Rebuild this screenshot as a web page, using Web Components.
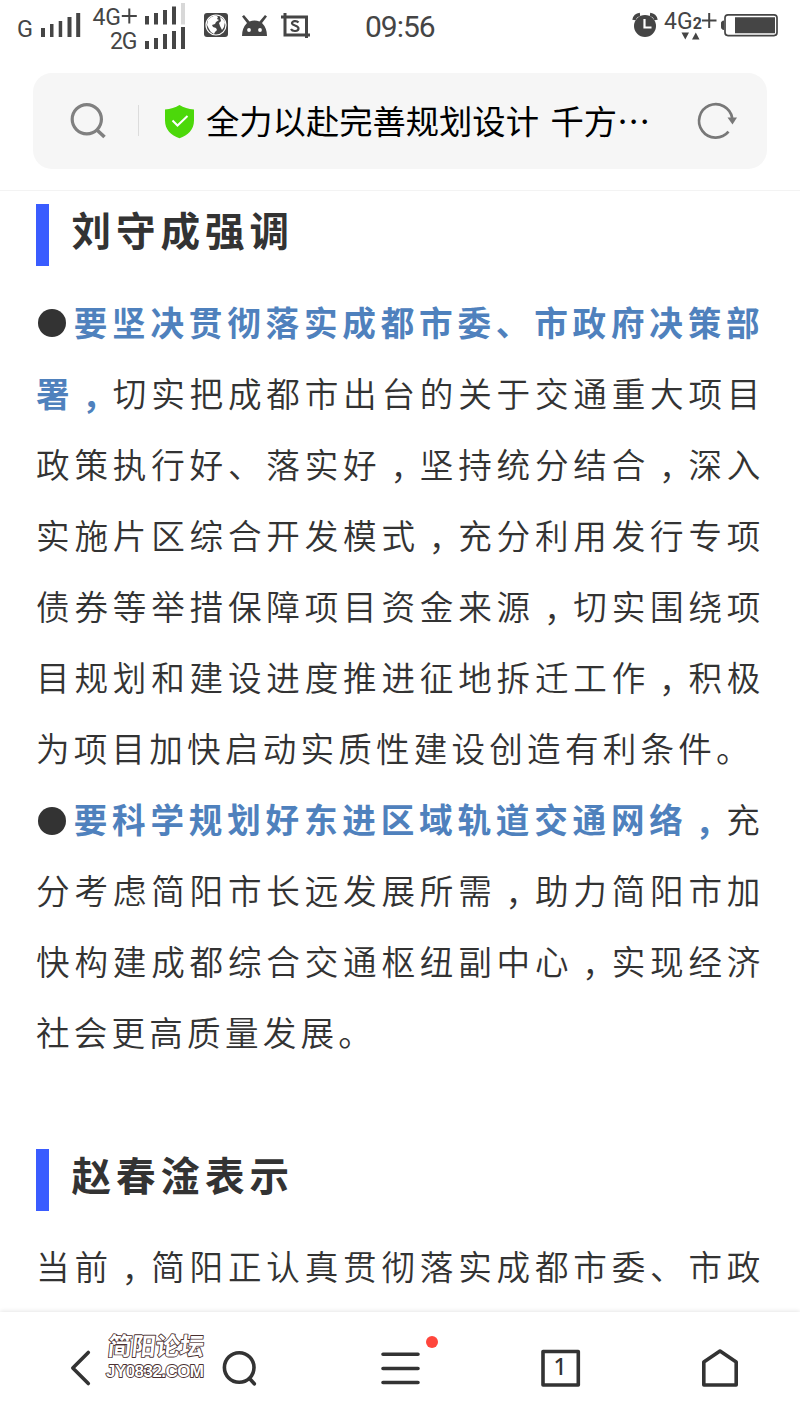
<!DOCTYPE html>
<html lang="zh-CN">
<head>
<meta charset="utf-8">
<title>刘守成强调</title>
<style>
    html, body {
        margin: 0;
        background: #fff;
    }
    body {
        width: 800px;
        height: 1423px;
        overflow: hidden;
        font-family: "Noto Sans CJK SC", sans-serif;
        color: #333;
    }
</style>
</head>
<body>
<phone-screen>
    <status-bar slot="top" time="09:56"></status-bar>
    <address-bar slot="top">全力以赴完善规划设计 千方…</address-bar>

    <section-title>刘守成强调</section-title>
    <article-text><bullet-dot></bullet-dot><b>要坚决贯彻落实成都市委、市政府决策部<br>署<i>，</i></b>切实把成都市出台的关于交通重大项目<br>政策执行好、落实好<i>，</i>坚持统分结合<i>，</i>深入<br>实施片区综合开发模式<i>，</i>充分利用发行专项<br>债券等举措保障项目资金来源<i>，</i>切实围绕项<br>目规划和建设进度推进征地拆迁工作<i>，</i>积极<br><span>为项目加快启动实质性建设创造有利条件。</span></article-text>
    <article-text><bullet-dot></bullet-dot><b>要科学规划好东进区域轨道交通网络<i>，</i></b>充<br>分考虑简阳市长远发展所需<i>，</i>助力简阳市加<br>快构建成都综合交通枢纽副中心<i>，</i>实现经济<br><span>社会更高质量发展。</span></article-text>
    <section-title class="next">赵春淦表示</section-title>
    <article-text>当前<i>，</i>简阳正认真贯彻落实成都市委、市政</article-text>

    <nav-bar slot="bottom" tabs="1">
        <water-mark></water-mark>
    </nav-bar>
</phone-screen>

<script>
class PhoneScreen extends HTMLElement {
    constructor() {
        super();
        this.attachShadow({ mode: 'open' });
        this.shadowRoot.innerHTML = `
            <style>
                :host {
                    display: flex;
                    flex-direction: column;
                    height: 1423px;
                }
                main {
                    flex: 1;
                    min-height: 0;
                    overflow: hidden;
                    padding: 13px 0 0 36px;
                    box-sizing: border-box;
                }
                ::slotted(section-title.next) {
                    margin-top: 81px;
                }
            </style>
            <slot name="top"></slot>
            <main><slot></slot></main>
            <slot name="bottom"></slot>
        `;
    }
}

class StatusBar extends HTMLElement {
    constructor() {
        super();
        this.attachShadow({ mode: 'open' });
        this.shadowRoot.innerHTML = `
            <style>
                :host {
                    display: flex;
                    height: 56px;
                    flex: none;
                    color: #454545;
                    font-family: Roboto, sans-serif;
                }
                svg {
                    display: block;
                    flex: none;
                    fill: currentColor;
                }
                .time {
                    width: 170px;
                    padding-left: 45px;
                    font-size: 30px;
                    line-height: 54px;
                    letter-spacing: -1px;
                    flex: 1;
                }
            </style>
            <svg width="190" height="56" viewBox="0 0 190 56" font-size="23">
                <text x="17" y="36.5" textLength="16" lengthAdjust="spacingAndGlyphs">G</text>
                <path d="M41 28h4v9h-4zM50 24h3.5v13H50zM58.700 21h3.500v16h-3.500zM67.500 17h4v20h-4zM76.200 13h4v24h-4z"/>
                <text x="92.500" y="24.500" textLength="28.500">4G</text>
                <path d="M121.800 15h6.500V8.500h2V15h6.500v2h-6.500v6.500h-2V17h-6.500z"/>
                <path d="M145 16h4v8.500h-4zM154 13h4v11.500h-4zM163 10h4v14.500h-4zM172 6.500h4v18h-4z"/>
                <path fill="#d8d8d8" d="M181 3h4v21.500h-4z"/>
                <text x="110" y="49" textLength="27.500">2G</text>
                <path d="M145 41h4v8h-4zM154 38h4v11h-4zM163 34h4v15h-4zM172 31h4v18h-4zM181 27h4v22h-4z"/>
            </svg>
            <svg width="130" height="56" viewBox="190 0 130 56">
                <rect x="204" y="13" width="24" height="24" rx="3"/>
                <circle cx="216" cy="25" r="10" fill="none" stroke="#fff" stroke-width="1.200"/>
                <path fill="#fff" d="M208 20q3-4 8-4.500l2 1.500-1 2 2 1-3 2-1 2-3 1 1 2 3 1 1 2-2 2-1 2q-4-2-5-5l-2-4zM220 17q3 1 5 5l-1 5-2 3-2-4-1-3 2-2z"/>
                <path d="M242 36q0-8 5-13l-5-6.500 2-1.500 5.500 6.500q5-2 10 0l5.500-6.500 2 1.500-5 6.500q5 5 5 13z"/>
                <circle cx="249" cy="30" r="1.900" fill="#fff"/><circle cx="260" cy="30" r="1.900" fill="#fff"/>
                <path fill="none" stroke="currentColor" stroke-width="3" d="M281 17h25.500v21M285 13v22h25"/>
                <path fill="none" stroke="currentColor" stroke-width="2.200" d="M298.500 22.500c-2-2.500-7-1.500-6.500 1 .5 2.500 6.500 1.500 6.500 5 0 3-6 3.500-7.500.5"/>
            </svg>
            <div class="time"></div>
            <svg width="180" height="56" viewBox="620 0 180 56">
                <circle cx="645" cy="26" r="11"/>
                <path fill="none" stroke="currentColor" stroke-width="3.500" d="M634 20q1-5 6-5.500M656 20q-1-5-6-5.500"/>
                <path fill="none" stroke="#fff" stroke-width="2.200" d="M644.500 19v8.500h7"/>
                <text x="664" y="29" font-size="24" textLength="28.500" lengthAdjust="spacingAndGlyphs">4G</text>
                <text x="692.800" y="29" font-size="16" font-weight="700">2</text>
                <path d="M702 19.500h6.200V13h2v6.500h6.300v2h-6.300V28h-2v-6.500H702zM681.500 32.500h7.500l-3.700 7zM692 39.500h7.500l-3.700-7z"/>
                <rect x="725" y="14.800" width="52" height="20.800" rx="3" fill="none" stroke="currentColor" stroke-width="1.700"/>
                <path d="M735 17.300h40v16h-40zM724 20.500q-3 .5-3 2.500v4q0 2.500 3 3z"/>
            </svg>
        `;
        this._time = this.shadowRoot.querySelector('.time');
    }

    connectedCallback() {
        this._time.textContent = this.getAttribute('time');
    }
}

class AddressBar extends HTMLElement {
    constructor() {
        super();
        this.attachShadow({ mode: 'open' });
        this.shadowRoot.innerHTML = `
            <style>
                :host {
                    display: block;
                    flex: none;
                    height: 135px;
                    padding: 17px 33px 0;
                    box-sizing: border-box;
                    border-bottom: 1px solid #f3f3f3;
                }
                .box {
                    display: flex;
                    height: 96px;
                    border-radius: 19px;
                    background: #f6f6f6;
                }
                svg {
                    flex: none;
                    fill: none;
                }
                .text {
                    flex: 1;
                    color: #000;
                    font-size: 33.300px;
                    line-height: 93px;
                    word-spacing: 4px;
                    white-space: nowrap;
                }
            </style>
            <div class="box">
                <svg width="173" height="96" viewBox="33 73 173 96">
                    <circle cx="86.800" cy="119.300" r="14.600" stroke="#808080" stroke-width="3.200"/>
                    <path d="M97 130l7.500 7" stroke="#808080" stroke-width="3.600"/>
                    <path d="M138.500 105v31" stroke="#dcdcdc"/>
                    <path fill="#4cd80a" d="M179.500 105c4 2.700 9 4 14.500 4.500v11c0 9-6 15-14.500 17.700-8.500-2.700-14.500-8.700-14.500-17.700v-11c5.500-.5 10.500-1.800 14.500-4.500z"/>
                    <path d="M172.500 120.500l5 5 10-9.500" stroke="#fff" stroke-width="2"/>
                </svg>
                <div class="text"><slot></slot></div>
                <svg width="87" height="96" viewBox="680 73 87 96">
                    <path d="M728.500 131.700a16.700 16.700 0 1 1 3.700-13.700" stroke="#787878" stroke-width="2.700"/>
                    <path fill="#787878" d="M727.500 117.500h9.500l-4.500 7z"/>
                </svg>
            </div>
        `;
    }
}

class SectionTitle extends HTMLElement {
    constructor() {
        super();
        this.attachShadow({ mode: 'open' });
        this.shadowRoot.innerHTML = `
            <style>
                :host {
                    display: block;
                    height: 62px;
                    margin-bottom: 19.500px;
                    padding-left: 22.500px;
                    border-left: 13px solid #3a5cff;
                    font-size: 39.600px;
                    font-weight: 700;
                    letter-spacing: 4.900px;
                    line-height: 49px;
                    white-space: nowrap;
                }
            </style>
            <slot></slot>
        `;
    }
}

class ArticleText extends HTMLElement {
    constructor() {
        super();
        this.attachShadow({ mode: 'open' });
        this.shadowRoot.innerHTML = `
            <style>
                :host {
                    display: block;
                    font-size: 33.600px;
                    font-weight: 350;
                    letter-spacing: 4.800px;
                    line-height: 71.100px;
                    white-space: nowrap;
                }
                ::slotted(b) {
                    color: #4f81bd;
                    font-weight: 700;
                }
                /* closing lines are not stretched to the column */
                ::slotted(span) {
                    letter-spacing: 4.200px;
                }
            </style>
            <slot></slot>
        `;
        // commas sit in the middle of their cell, on the baseline
        this.querySelectorAll('i').forEach((i) => {
            i.style.cssText = 'display:inline-block;font-family:"Noto Sans CJK TC",sans-serif;font-style:normal;line-height:1;transform:translateY(12px)';
        });
    }
}

class BulletDot extends HTMLElement {
    constructor() {
        super();
        this.attachShadow({ mode: 'open' });
        this.shadowRoot.innerHTML = `
            <style>
                :host {
                    display: inline-block;
                    width: 28px;
                    height: 28px;
                    margin: 0 7.700px 0 2px;
                    border-radius: 50%;
                    background: #333;
                    vertical-align: -1.500px;
                }
            </style>
        `;
    }
}

class WaterMark extends HTMLElement {
    constructor() {
        super();
        this.attachShadow({ mode: 'open' });
        this.shadowRoot.innerHTML = `
            <style>
                :host {
                    display: block;
                }
                svg {
                    display: block;
                }
                text {
                    fill: #fff;
                    stroke: #49302f;
                    stroke-width: 1.800;
                    stroke-linejoin: round;
                    paint-order: stroke;
                }
            </style>
            <svg width="120" height="70" viewBox="98 1322 120 70">
                <text transform="translate(107 1355) skewX(-6)" font-family="Noto Sans CJK SC" font-weight="700" font-size="24.500" textLength="96" lengthAdjust="spacingAndGlyphs">简阳论坛</text>
                <text x="106" y="1376.500" font-family="Liberation Sans" font-weight="700" font-size="17" textLength="98">JY0832.COM</text>
            </svg>
        `;
    }
}

class NavBar extends HTMLElement {
    constructor() {
        super();
        this.attachShadow({ mode: 'open' });
        this.shadowRoot.innerHTML = `
            <style>
                :host {
                    position: relative;
                    display: grid;
                    grid-template-columns: repeat(5, 1fr);
                    flex: none;
                    height: 111px;
                    background: #fff;
                    box-shadow: 0 -1px 4px rgba(0, 0, 0, .1);
                }
                svg {
                    display: block;
                    fill: none;
                    stroke: #333;
                    stroke-width: 3.600;
                    stroke-linecap: round;
                    stroke-linejoin: round;
                }
                text {
                    fill: #333;
                    stroke: none;
                    font: 500 23px "Noto Sans", sans-serif;
                }
                ::slotted(water-mark) {
                    position: absolute;
                    left: 98px;
                    top: 10px;
                }
            </style>
            <svg width="160" height="111" viewBox="0 1312 160 111"><path d="M88.300 1352.500l-15.500 15.500 15.500 15.500"/></svg>
            <svg width="160" height="111" viewBox="160 1312 160 111"><circle cx="239.200" cy="1367.500" r="14.800"/><path d="M250 1379l4.300 4.800"/></svg>
            <svg width="160" height="111" viewBox="320 1312 160 111">
                <path d="M383 1354.300h35M383 1368.500h35M383 1382.500h35"/>
                <circle cx="432" cy="1342" r="6" fill="#ff463c" stroke="none"/>
            </svg>
            <svg width="160" height="111" viewBox="480 1312 160 111">
                <rect x="543" y="1351.500" width="35.300" height="33.500"/>
                <text x="560" y="1375" text-anchor="middle"></text>
            </svg>
            <svg width="160" height="111" viewBox="640 1312 160 111"><path d="M720 1351l16.200 11v23h-32.400v-23z"/></svg>
            <slot></slot>
        `;
        this._tabs = this.shadowRoot.querySelector('text');
    }

    connectedCallback() {
        this._tabs.textContent = this.getAttribute('tabs');
    }
}

customElements.define('phone-screen', PhoneScreen);
customElements.define('status-bar', StatusBar);
customElements.define('address-bar', AddressBar);
customElements.define('section-title', SectionTitle);
customElements.define('article-text', ArticleText);
customElements.define('bullet-dot', BulletDot);
customElements.define('water-mark', WaterMark);
customElements.define('nav-bar', NavBar);
</script>
</body>
</html>
